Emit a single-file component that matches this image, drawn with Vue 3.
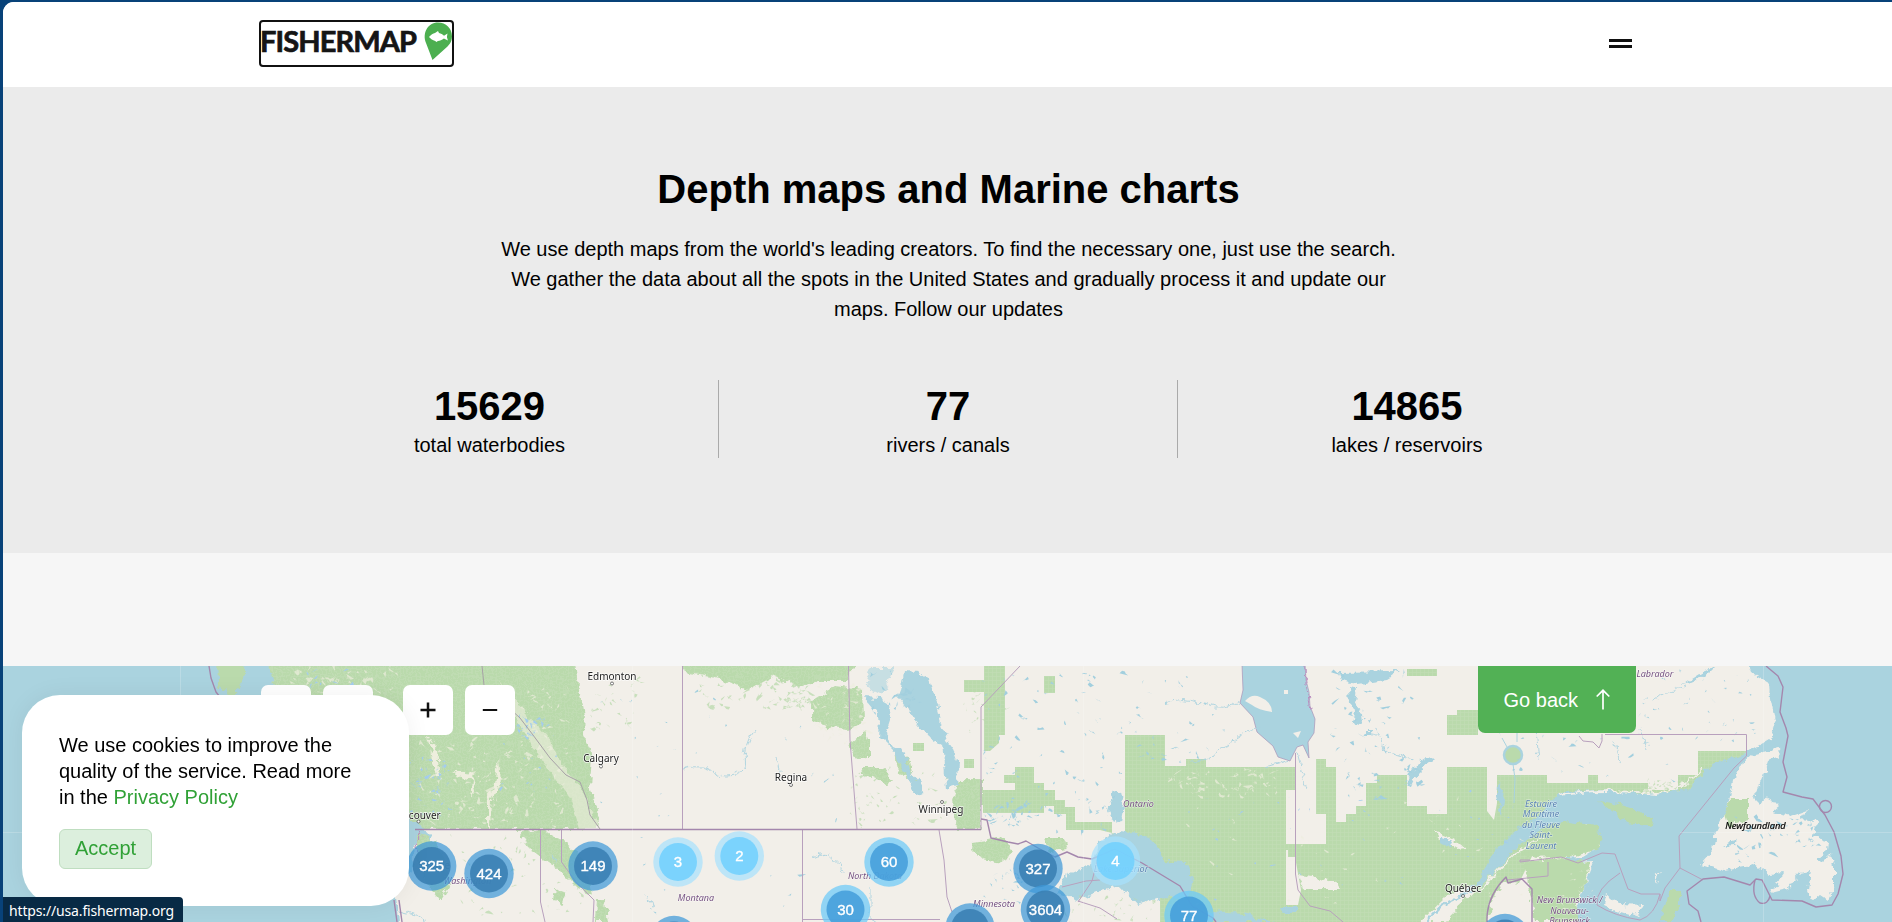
<script setup>
const stats = [
  { value: '15629', label: 'total waterbodies' },
  { value: '77', label: 'rivers / canals' },
  { value: '14865', label: 'lakes / reservoirs' },
]

const markers = [
  { x: 431.7, y: 866, n: '325', kind: 'dark' },
  { x: 489, y: 873.5, n: '424', kind: 'dark' },
  { x: 593, y: 866, n: '149', kind: 'dark' },
  { x: 678, y: 862, n: '3', kind: 'light' },
  { x: 739.3, y: 856, n: '2', kind: 'light' },
  { x: 889, y: 862, n: '60', kind: 'mid' },
  { x: 845.5, y: 909.5, n: '30', kind: 'mid' },
  { x: 1038, y: 868.5, n: '327', kind: 'dark' },
  { x: 1045.5, y: 909.5, n: '3604', kind: 'dark' },
  { x: 1115.5, y: 861, n: '4', kind: 'light' },
  { x: 1189, y: 915.5, n: '77', kind: 'mid' },
  { x: 674, y: 940.5, n: '', kind: 'dark' },
  { x: 970, y: 928, n: '1145', kind: 'dark' },
  { x: 1505, y: 938.5, n: '', kind: 'dark' },
]

const cities = [
  { x: 612, y: 681, n: 'Edmonton', dx: 612, dy: 683.5 },
  { x: 601, y: 763, n: 'Calgary', dx: 601, dy: 766.5 },
  { x: 791, y: 782, n: 'Regina', dx: 791, dy: 785 },
  { x: 941, y: 814, n: 'Winnipeg', dx: 942, dy: 802 },
  { x: 416, y: 819.5, n: 'Vancouver', dx: 418.5, dy: 821.5 },
  { x: 1463, y: 892.5, n: 'Québec', dx: 1463, dy: 896 },
]

const regions = [
  { x: 467.5, y: 885, n: 'Washington' },
  { x: 696, y: 902, n: 'Montana' },
  { x: 875, y: 879.5, n: 'North Dakota' },
  { x: 994, y: 908, n: 'Minnesota' },
  { x: 1138.5, y: 807.5, n: 'Ontario' },
  { x: 1646, y: 677.5, n: 'and Labrador' },
  { x: 1569.5, y: 904, n: 'New Brunswick /' },
  { x: 1569.5, y: 914.5, n: 'Nouveau-' },
  { x: 1569.5, y: 924.5, n: 'Brunswick' },
]

const gulf = ['Estuaire', 'Maritime', 'du Fleuve', 'Saint-', 'Laurent']

// Seeded generator keeps the small lakes and clearings stable between renders
function rng(seed) {
  let s = seed
  return () => {
    s = (s * 16807) % 2147483647
    return s / 2147483647
  }
}

function flecks(seed, count, x0, y0, w, h, size) {
  const r = rng(seed)
  let d = ''
  for (let i = 0; i < count; i++) {
    const x = x0 + r() * w
    const y = y0 + r() * h
    d += `M${x.toFixed(1)} ${y.toFixed(1)}`
    const steps = 3 + Math.floor(r() * 3)
    for (let k = 0; k < steps; k++) {
      d += `l${((r() - 0.4) * size).toFixed(1)} ${((r() - 0.5) * size).toFixed(1)}`
    }
  }
  return d
}

const lakes = [
  flecks(7, 80, 985, 670, 240, 95, 5),
  flecks(13, 45, 985, 765, 140, 65, 5),
  flecks(19, 60, 1330, 670, 90, 130, 6),
  flecks(23, 22, 1500, 735, 170, 45, 5),
  flecks(29, 40, 1640, 670, 120, 80, 4),
  flecks(31, 40, 1735, 815, 80, 45, 6),
  flecks(37, 25, 600, 680, 240, 140, 4),
  flecks(47, 14, 870, 670, 50, 40, 7),
  flecks(51, 24, 985, 800, 45, 24, 6),
  flecks(59, 16, 985, 870, 40, 35, 5),
  flecks(61, 8, 640, 835, 160, 80, 4),
].join('')

const brightLakes = [
  flecks(41, 45, 409, 760, 40, 55, 5),
  flecks(43, 22, 518, 718, 28, 20, 6),
  flecks(45, 10, 305, 668, 55, 20, 6),
  flecks(53, 50, 1170, 790, 360, 120, 4),
  flecks(67, 18, 500, 735, 55, 60, 4),
].join('')

const clearings = [
  flecks(71, 100, 420, 740, 150, 85, 7),
  flecks(73, 40, 290, 666, 100, 25, 7),
  flecks(79, 60, 1170, 770, 110, 25, 6),
  flecks(83, 36, 1180, 800, 340, 115, 5),
  flecks(87, 50, 815, 680, 50, 65, 5),
  flecks(89, 35, 520, 690, 50, 80, 6),
  flecks(95, 22, 1560, 870, 35, 50, 4),
].join('')

const scrub = [
  flecks(91, 26, 590, 680, 45, 50, 5),
  flecks(93, 65, 700, 680, 110, 30, 7),
  flecks(97, 50, 850, 770, 100, 55, 5),
  flecks(99, 50, 450, 832, 140, 85, 5),
  flecks(101, 28, 965, 690, 40, 40, 5),
  flecks(103, 30, 1065, 895, 90, 30, 5),
  flecks(105, 40, 1640, 780, 50, 12, 4),
].join('')
</script>

<template>
  <div class="page">
    <header class="header">
      <div class="container header-row">
        <a class="logo" aria-label="Fishermap">
          <svg width="191" height="43" viewBox="261 22 191 43">
            <text class="logo-text" x="260" y="52" textLength="157" lengthAdjust="spacing">FISHERMAP</text>
            <path fill="#4caf50" d="M438 22.5c8 0 14 6 14 13.8 0 6-3 9-7 12.500L432.500 60l-6.500-17c-4-10 2-20.500 12-20.500z" />
            <path fill="#fff" d="M429 37c2-2.500 4-3.600 6-4l3-2 1 2c2 .5 3.500 1.500 5 2.700l3.500-2.200-.6 3.500 1 3.500-4-2c-2 1.600-4 2.300-6 2.500l-1.500 1-1.200-1c-2.500-.7-4.500-2-6.200-4z" />
          </svg>
        </a>
        <button class="menu" aria-label="Menu"><span></span><span></span></button>
      </div>
    </header>

    <section class="hero">
      <h1>Depth maps and Marine charts</h1>
      <p class="lead">
        We use depth maps from the world's leading creators. To find the necessary one, just use the search.<br />
        We gather the data about all the spots in the United States and gradually process it and update our<br />
        maps. Follow our updates
      </p>
      <div class="container stats">
        <div v-for="s in stats" :key="s.label" class="stat">
          <strong>{{ s.value }}</strong>
          <span>{{ s.label }}</span>
        </div>
      </div>
    </section>

    <section class="map">
      <svg class="tiles" width="1889" height="256" viewBox="3 666 1889 256">
        <defs>
          <pattern id="wood" width="4" height="4" patternUnits="userSpaceOnUse">
            <rect width="4" height="4" fill="#badaac" />
            <path d="M0 .5H4M.5 0V4" stroke="#c2ddb4" stroke-width=".7" />
          </pattern>
          <filter id="rough" x="-5%" y="-5%" width="110%" height="110%" color-interpolation-filters="sRGB">
            <feTurbulence type="fractalNoise" baseFrequency=".13" numOctaves="3" seed="4" />
            <feDisplacementMap in="SourceGraphic" scale="9" xChannelSelector="R" yChannelSelector="G" />
          </filter>
        </defs>
        <rect x="3" y="666" width="1889" height="256" fill="#f2efe9" />

        <!-- Pacific coast -->
        <g filter="url(#rough)">
          <path fill="url(#wood)" d="M255 655H573L580 690 585 715 584 735 592 752 590 790 597 808 598 829H250z" />
          <path fill="#aad3df" d="M-10 650H264L272 680 282 710 320 770 395 850 395 880 399 940H-10z" />
          <path fill="#badaac" d="M218 660H245L243 680 237 690 238 706 226 694 219 684z" />
          <path fill="#aad3df" d="M400 812L416 822 428 832 434 845 428 852 421 842 414 844 412 870 400 880z" />
          <path fill="#eeeede" d="M500 682L520 705 548 737 563 765 585 795 599 829 580 829 570 798 540 757 520 727 508 706z" opacity=".6" />
          <path fill="#eeeede" d="M428 735L437 750 439 770 441 776 437 776 433 758zM452 773L463 773 478 774 472 777 475 790 470 797 472 780 458 776zM499 757L501 785 491 800 490 829 488 829 488 800 495 785z" />
          <path fill="url(#wood)" d="M418 833L435 842 445 860 450 885 440 900 425 880 417 860zM520 832L545 830 565 842 585 860 592 895 580 890 565 875 548 863 530 850zM555 889L567 893 562 905 553 900zM596 900L605 900 608 922 595 922z" />
        </g>

        <!-- Prairies and Manitoba -->
        <g filter="url(#rough)" fill="url(#wood)">
          <path d="M680 655H860L848 680 820 680 800 688 775 676 750 690 720 679 684 672z" />
          <path d="M812 700L835 686 862 690 863 722 847 730 830 728 812 720z" />
          <path d="M852 741L865 731 870 745 870 758 856 759 849 748z" />
          <path d="M862 767H884L893 781 887 784 863 774zM895 752L910 760 914 779 898 773z" />
          <path d="M958 780H982V829H956L952 800z" />
          <path d="M973 842L1005 837 1013 850 1005 863 981 859 972 850zM1045 838H1064L1068 850 1050 852z" />
        </g>

        <!-- Canadian Shield forest blocks -->
        <path fill="url(#wood)" d="M984 666H1005V735H999V743L990 751H984zM964 680H984V692H964zM913 743H924V751H913zM964 759H974V768H964zM1044 676H1055V693H1044zM1407 669H1437V676H1407zM1447 715H1457V710H1478V735H1447z" />
        <path fill="url(#wood)" d="M983 790H1015V783H1004V775H1015V767H1034V783H1044V790H1055V800H1065V807H1075V822H1112V835L1125 832V735H1165V766H1186V759H1206V767H1295V790H1286V844H1326V814H1316V759H1326V767H1336V822H1346V814H1356V806H1366V783H1377V775H1407V806H1427V814H1447V767H1487V811L1494 820 1497 803V775H1547V783H1588V775H1598V783H1648V790H1678V775H1698V751H1748L1705 790 1560 799 1500 922H1160V850L1120 835 1100 830H1066V814H1054V806H1044V813H983z" />
        <path fill="#f2efe9" d="M1286 850H1288V857H1295L1301 890 1298 905H1286z" />
        <path filter="url(#rough)" fill="#f2efe9" d="M1298 875L1312 877 1325 880 1338 883 1341 889 1304 889zM1434 830L1455 840 1465 848 1457 849 1438 838zM1420 922L1445 898 1468 886 1473 891 1445 922z" />

        <!-- Hudson Bay and lakes -->
        <path fill="#aad3df" stroke="#a994b8" stroke-width=".7" d="M1242 664L1243 690 1240 703 1253 717 1257 732 1273 746 1278 757 1290 761 1297 747 1303 745 1309 758 1308 742 1314 733 1315 719 1310 706 1309 692 1306 680 1305 664z" />
        <path fill="#f2efe9" d="M1245 701q7-8 15-4 12 5 12 15-14-2-20-7zM1284 690h4v4h-4zM1293 733l8-2-3 7z" />
        <g filter="url(#rough)" fill="#aad3df">
          <path d="M904 672L918 673 929 680 936 700 941 720 947 741 954 751 958 762 957 785 946 788 944 764 942 744 928 736 914 719 904 704 899 698z" />
          <path d="M864 697L879 698 888 703 890 720 885 735 893 747 905 752 909 771 922 785 923 793 915 795 909 780 900 764 893 750 880 737 881 720 873 708z" />
          <path d="M870 668H895L882 695 872 690 866 680z" opacity=".6" />
          <path d="M1113 790L1121 792 1124 805 1121 820 1113 822 1107 811z" />
          <path d="M1338 672L1400 671 1385 680 1358 684 1340 681zM1349 687L1357 689 1355 702 1362 713 1363 725 1353 723 1355 712 1350 703z" />
          <path d="M1407 784Q1411 765 1430 756L1434 760Q1417 769 1410 788z" />
          <path d="M1364 730h12l-3 5h-7zM1440 836l13 5-3 7-10-6zM1498 782l7 8-3 26-5-20z" />
          <path d="M1056 893L1067 875 1091 864 1098 842 1121 831 1150 837 1159 847 1163 861 1187 862 1193 880 1188 897 1156 899 1137 905 1119 886 1102 890 1077 901z" />
          <path d="M1210 912L1245 914 1273 922H1205z" />
          <path d="M1280 907h17v6h-15z" />
        </g>
        <circle cx="1513" cy="755" r="9" fill="#badaac" stroke="#aad3df" stroke-width="2.500" />
        <path fill="none" stroke="#aad3df" d="M1517 742V732M1507 747l-5-9M1513 764l2 15-1 24M1423 764q-12 7-15 20M1430 760q-12 7-18 18" />

        <!-- Atlantic -->
        <g filter="url(#rough)">
          <path fill="#aad3df" d="M1476 884L1494 852 1514 832 1536 819 1550 802 1565 791 1600 790 1655 795 1689 788 1711 765 1746 753 1770 739 1775 720 1771 700 1770 684 1750 672 1744 655H1910V940H1585L1576 910 1585 885 1594 861 1576 862 1560 858 1582 857 1600 846 1601 834 1586 824 1565 825 1540 832 1518 846 1500 866 1481 887z" />
          <path fill="#f2efe9" d="M1701 863L1713 850 1716 831 1727 810 1733 781 1742 764 1752 755 1778 748 1779 756 1768 761 1763 776 1754 798 1761 805 1767 796 1771 804 1780 805 1772 812 1791 816 1808 810 1801 820 1817 822 1814 834 1823 842 1828 843 1827 851 1816 859 1821 863 1831 853 1834 866 1834 887 1827 900 1821 896 1811 900 1807 891 1810 871 1800 873 1787 889 1771 893 1784 874 1770 875 1755 864 1724 870z" />
          <path fill="#badaac" d="M1724 815L1731 799H1749V820L1727 825zM1598 801L1619 804 1641 812 1653 822 1651 827 1628 823 1613 812z" />
          <path fill="#badaac" d="M1535 834L1550 825 1570 822 1596 826 1603 837 1598 849 1570 857 1535 859 1515 851zM1670 890L1681 890 1678 910 1670 922H1660zM1524 862L1560 858 1590 863 1585 885 1576 904 1580 922H1535z" />
          <path fill="#f2efe9" d="M1606 893L1620 904 1644 905 1637 917 1616 911 1603 905zM1655 875l5-4-5 14z" />
        </g>
        <path filter="url(#rough)" fill="#f2efe9" d="M1504 882L1520 884 1530 890V922H1488L1493 898z" />
        <path filter="url(#rough)" fill="none" stroke="#f2efe9" stroke-width="1.800" d="M1482 890Q1508 853 1544 837M1560 796Q1580 788 1655 793 1685 790 1702 769" />
        <path filter="url(#rough)" fill="#aad3df" d="M1682 684L1703 671 1715 667 1708 674 1690 682zM1736 838l-12 8 10-1z" />

        <path :d="scrub" fill="#badaac" opacity=".75" />
        <path :d="clearings" fill="#eeeede" opacity=".7" />
        <path :d="lakes" fill="#a2cfde" />
        <path :d="brightLakes" fill="#a3ccee" />

        <!-- Rivers -->
        <g filter="url(#rough)" fill="none" stroke="#aad3df" stroke-width=".9">
          <path d="M683 769Q705 762 718 775 735 779 746 768 742 745 755 730M777 755l3 17M812 858q20-9 21 4 9-2 10 10M1166 704q15-9 37 0 22 8 38-3M1190 761q20 1 30-11 24-16 38-24M1297 752l10 38M1290 760l-25 7M1371 733q14 1 11 17 13 4 30 9M871 889v30l6 4M1640 730l7 22M1536 730l3 30M1613 740l8 26M1652 700q20-8 34-15M551 856l7 5-4 5M646 895l7 13M395 910l20 5 10 7" />
        </g>
        <path filter="url(#rough)" fill="none" stroke="#aad3df" stroke-width="2.500" d="M1475 885L1460 897 1442 905 1426 922" />

        <!-- Borders -->
        <g fill="none" stroke="#b8a0bd" stroke-width="1">
          <path d="M682.500 666V829.500M848.500 666L850 740 857 829M981 829V707L1020 666M1295.500 753V874L1298 890 1310 906 1330 911 1343 922M540.500 830V902L545 922M561.500 830V862L576 882 594 900 593 922M802.500 830V922M803 919.500H940M939 830L944 860 947 897 952 912M1605 734.500H1746.500V756L1734 768 1679 836 1680 868 1665 888 1660 901 1660 894H1641L1628 889 1615 854 1602 853 1578 863 1561 857 1520 862M1680 868L1703 880M1660 894Q1655 915 1640 920 1614 916 1597 905 1595 889 1620 873M1520 862V860H1530M1548 862V876L1507 880M1078 902L1092 881 1100 850M1078 901l22 7 17 11M1062 887l24-6 14-1" />
          <path d="M482 666L484 685 520 718 533 735 550 758 566 775 580 782 587 800 590 815 600 829" stroke="#a7a1a7" />
          <path d="M1579 736l4 5 10 1 6 6 3-7v-7" />
        </g>
        <g fill="none" stroke="#a487ad" stroke-width="1.400" stroke-linejoin="round">
          <path d="M209 666L211 678 216 692 220 697M415 829.500H981M981 819L987 820 991 838 1008 842 1018 844 1026 841 1038 848 1055 857 1067 852 1078 857 1092 859 1115 849 1142 863 1180 886 1192 906 1213 918 1216 922M1766 666L1778 676 1783 687 1780 712 1786 728 1788 736 1783 762 1787 777 1783 792 1802 797 1813 799 1825 815 1834 832 1841 856 1843 874 1838 894 1832 905 1816 907 1802 901 1772 900 1762 880 1756 879 1750 885 1724 877 1703 879 1687 891 1689 904 1698 911 1701 922M1487 922Q1486 897 1506 877L1508 883 1522 879 1532 889V922M394 900l3 22M399 900l3 22" />
          <path d="M1755 880q-4 16 5 23 8 2 10-7" />
          <circle cx="1825.500" cy="806.500" r="6" />
        </g>
        <path filter="url(#rough)" stroke="#ba8dbf" fill="none" d="M417 830l4 7-6 8 5 7M1305 666l1 18 5 25" />
        <path d="M180.500 666V922M632.500 666V922M1083.500 666V922M1763.500 666V922M3 832.500H22M1680 832.500H1892" stroke="#fff" opacity=".2" />

        <!-- Place names -->
        <g v-for="c in cities" :key="c.n">
          <circle :cx="c.dx" :cy="c.dy" r="1.500" fill="#fff" stroke="#555" stroke-width=".8" />
          <text class="city" :x="c.x" :y="c.y - 1">{{ c.n }}</text>
        </g>
        <text v-for="r in regions" :key="r.n" class="region" :x="r.x" :y="r.y - 1">{{ r.n }}</text>
        <text v-for="(line, i) in gulf" :key="line" class="water" x="1541" :y="806.5 + i * 10.500">{{ line }}</text>
        <text class="water" x="1121" y="872">Lake Superior</text>
        <text class="island" x="1755.500" y="828.500">Newfoundland</text>
        <text class="city" x="434" y="869">Seattle</text>

        <g v-for="(m, i) in markers" :key="i" :class="['marker', m.kind]">
          <circle class="halo" :cx="m.x" :cy="m.y" r="24.700" />
          <circle class="core" :cx="m.x" :cy="m.y" r="19" />
          <text :x="m.x" :y="m.y + 5.300">{{ m.n }}</text>
        </g>
      </svg>

      <div class="container overlay">
        <div class="tools">
          <span class="tool"></span>
          <span class="tool"></span>
          <button class="tool zoom-in" aria-label="Zoom in">
            <svg width="16" height="16" viewBox="0 0 16 16"><path d="M8 .5v15M.5 8h15" stroke="#111" stroke-width="2.500" /></svg>
          </button>
          <button class="tool" aria-label="Zoom out">
            <svg width="16" height="16" viewBox="0 0 16 16"><path d="M.8 8h14.400" stroke="#111" stroke-width="2" /></svg>
          </button>
        </div>
        <button class="back">
          <span>Go back</span>
          <svg width="14" height="21" viewBox="0 0 14 21"><path d="M7 20.500V1.500M.7 7.500L7 1.300l6.300 6.200" fill="none" stroke="#fff" stroke-width="1.700" /></svg>
        </button>
      </div>
    </section>

    <aside class="cookies">
      <p>We use cookies to improve the<br />quality of the service. Read more<br />in the <a>Privacy Policy</a></p>
      <button class="accept">Accept</button>
    </aside>
    <div class="status">https://usa.fishermap.org</div>
  </div>
</template>

<style>
body {
  background: #084279;
  overflow: hidden;
}
</style>

<style scoped>
.page {
  position: relative;
  box-sizing: border-box;
  height: 920px;
  margin: 2px 0 0 3px;
  overflow: hidden;
  border-radius: 11px 0 0 0;
  background: #f6f6f6;
  color: #000;
  font-family: "Liberation Sans", Arial, sans-serif;
  font-size: 20px;
}
button {
  margin: 0;
  padding: 0;
  border: 0;
  font: inherit;
}
.container {
  width: 1377px;
  margin: 0 auto;
}
.header {
  height: 85px;
  background: #fff;
}
.header-row {
  display: flex;
  justify-content: space-between;
  padding-top: 18px;
}
.logo {
  display: flex;
  border: 2px solid #111;
  border-radius: 4px;
}
.logo-text {
  font-family: Lato, "Liberation Sans", sans-serif;
  font-size: 29px;
  font-weight: 700;
  fill: #151515;
  stroke: #151515;
  stroke-width: 0.7px;
}
.menu {
  display: flex;
  flex-direction: column;
  gap: 3px;
  width: 23px;
  margin: 19px 4px 0 0;
  background: none;
}
.menu span {
  height: 3px;
  background: #111;
}
.hero {
  box-sizing: border-box;
  height: 466px;
  padding-top: 78px;
  background: #ebebeb;
  text-align: center;
}
h1 {
  margin: 0;
  padding-left: 2px;
  font-size: 40px;
  line-height: 48px;
}
.lead {
  margin: 21px 0 0;
  padding-left: 2px;
  line-height: 30px;
}
.stats {
  display: grid;
  grid-template-columns: repeat(3, 1fr);
  margin-top: 56px;
}
.stat {
  box-sizing: border-box;
  display: flex;
  flex-direction: column;
  height: 78px;
  padding-top: 2px;
}
.stat:first-child {
  padding-left: 2px;
}
.stat + .stat {
  border-left: 1px solid #aaa;
}
.stat strong {
  font-size: 40px;
  line-height: 48px;
}
.stat span {
  line-height: 30px;
}
.map {
  position: relative;
  height: 256px;
  margin-top: 113px;
  overflow: hidden;
}
.tiles {
  display: block;
}
.tiles text {
  text-anchor: middle;
  font-family: "Noto Sans", sans-serif;
}
.tiles .city {
  font-size: 10px;
  fill: #222;
  paint-order: stroke;
  stroke: #fffc;
  stroke-width: 1.5px;
}
.tiles .region {
  font-size: 9px;
  font-style: italic;
  fill: #765382;
  paint-order: stroke;
  stroke: #fff9;
  stroke-width: 1px;
}
.tiles .water {
  font-size: 9px;
  font-style: italic;
  fill: #5982b2;
  paint-order: stroke;
  stroke: #fff8;
  stroke-width: 1px;
}
.tiles .island {
  font-size: 9.3px;
  font-style: italic;
  fill: #000;
  stroke: #000;
  stroke-width: 0.2px;
}
.tiles .marker text {
  font-family: "Liberation Sans", Arial, sans-serif;
  font-size: 15px;
  fill: #fff;
  stroke: #fff;
  stroke-width: 0.35px;
}
.halo {
  opacity: 0.72;
}
.core {
  opacity: 0.88;
}
.dark .halo {
  fill: #3f98d8;
}
.dark .core {
  fill: #3a80b3;
}
.mid .halo {
  fill: #6bc9f8;
}
.mid .core {
  fill: #459edb;
}
.light .halo {
  fill: #a8e1fc;
}
.light .core {
  fill: #72d0fe;
}
.overlay {
  position: absolute;
  top: 0;
  left: 256px;
  display: flex;
  justify-content: space-between;
  align-items: flex-start;
}
.tools {
  display: flex;
  gap: 12px;
  padding: 19px 0 0 2px;
}
.tool {
  display: flex;
  align-items: center;
  justify-content: center;
  width: 50px;
  height: 50px;
  border-radius: 7px;
  background: #fff;
}
.zoom-in {
  margin-left: 18px;
}
.back {
  display: flex;
  align-items: center;
  gap: 18px;
  height: 67px;
  padding: 0 26px;
  border-radius: 0 0 7px 7px;
  background: #52b155;
  color: #fff;
}
.back span {
  padding-top: 2px;
}
.cookies {
  position: absolute;
  left: 19px;
  bottom: 16px;
  box-sizing: border-box;
  width: 387px;
  height: 211px;
  padding: 37px;
  border-radius: 38px;
  background: #fff;
  box-shadow: 0 0 25px rgba(0, 0, 0, 0.06);
}
.cookies p {
  margin: 0 0 19px;
  line-height: 26px;
  white-space: nowrap;
}
.cookies a {
  color: #30a136;
}
.accept {
  width: 93px;
  height: 40px;
  padding-bottom: 2px;
  border: 1px solid #bfdec0;
  border-radius: 6px;
  background: #dcefdd;
  color: #30a136;
}
.status {
  position: absolute;
  left: 0;
  bottom: 0;
  box-sizing: border-box;
  width: 180px;
  height: 25px;
  padding-left: 6px;
  border-radius: 0 4px 0 0;
  background: #082a45;
  color: #fff;
  font: 14px/27px "Noto Sans", sans-serif;
  letter-spacing: -0.15px;
}
</style>
